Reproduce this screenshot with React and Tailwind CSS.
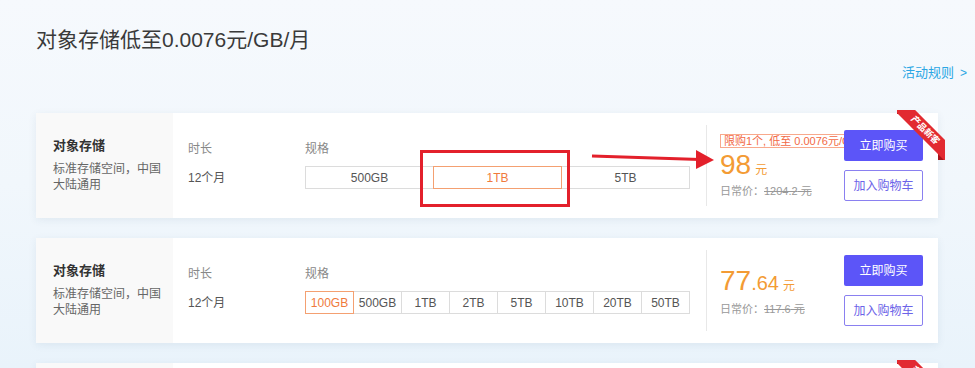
import React from 'react'

const cards = [
  {
    sizes: ['500GB', '1TB', '5TB'],
    selected: 1,
    price: '98',
    decimals: '',
    orig: '1204.2',
    tag: '限购1个, 低至 0.0076元/GB/月',
    ribbon: true,
  },
  {
    sizes: ['100GB', '500GB', '1TB', '2TB', '5TB', '10TB', '20TB', '50TB'],
    selected: 0,
    price: '77',
    decimals: '.64',
    orig: '117.6',
    tag: null,
    ribbon: false,
  },
  {
    sizes: ['100GB', '500GB', '1TB', '2TB', '5TB'],
    selected: 0,
    price: '66',
    decimals: '',
    orig: '99.9',
    tag: null,
    ribbon: true,
  },
]

export default function App() {
  return (
    <div className="relative h-[368px] w-[975px] overflow-hidden bg-gradient-to-b from-[#f6f9fd] via-[#f1f7fc] to-[#e9f3fb] font-['Liberation_Sans','Noto_Sans_CJK_SC',sans-serif]">
      <div className="w-[967px] pl-[36px] pt-[28px]">
        <h1 className="text-[21px] leading-[24px] text-[#3a3a3a]">对象存储低至0.0076元/GB/月</h1>
        <div className="mt-[13px] flex justify-end">
          <span className="flex items-center gap-[6px] text-[13px] leading-[16px] text-[#2ba6e4]">
            活动规则<span className="text-[12px]">&gt;</span>
          </span>
        </div>
        <div className="mt-[32px] flex w-[902px] flex-col gap-[20px]">
          {cards.map((c, i) => (
            <ProductCard key={i} {...c} />
          ))}
        </div>
      </div>

      {/* annotation overlay */}
      <div className="absolute left-[420px] top-[150px] h-[57px] w-[150px] border-[3px] border-[#e3202b]" />
      <svg className="absolute left-[590px] top-[148px]" width="128" height="24" viewBox="0 0 128 24">
        <line x1="2" y1="8" x2="110" y2="11.5" stroke="#e3202b" strokeWidth="3" />
        <polygon points="106,2 124,12 106,21" fill="#e3202b" />
      </svg>
    </div>
  )
}

function ProductCard({ sizes, selected, price, decimals, orig, tag, ribbon }) {
  return (
    <div className="relative flex h-[105px] shrink-0 bg-white shadow-[0_2px_8px_rgba(40,80,120,0.08)]">
      <div className="w-[137px] shrink-0 bg-[#f9f9f9] pl-[17px] pr-[8px] pt-[24px]">
        <div className="text-[13px] font-bold leading-[18px] text-[#333]">对象存储</div>
        <div className="mt-[6px] text-[12px] leading-[16px] text-[#666]">标准存储空间，中国大陆通用</div>
      </div>

      <div className="flex w-[533px] shrink-0 pl-[15px] pt-[28px]">
        <div className="w-[117px]">
          <div className="text-[12px] leading-[16px] text-[#888]">时长</div>
          <div className="mt-[9px] flex h-[23px] items-center text-[12px] text-[#555]">12个月</div>
        </div>
        <div className="w-[385px]">
          <div className="text-[12px] leading-[16px] text-[#888]">规格</div>
          <div className="mt-[9px] flex h-[23px]">
            {sizes.map((s, i) => (
              <div
                key={s}
                className={
                  i === selected
                    ? 'relative z-10 -ml-px flex flex-1 items-center justify-center border border-[#f4a071] text-[12px] text-[#f07a3c] first:ml-0'
                    : '-ml-px flex flex-1 items-center justify-center border border-[#dcdcdc] text-[12px] text-[#555] first:ml-0'
                }
              >
                {s}
              </div>
            ))}
          </div>
        </div>
      </div>

      <div className="my-[12px] w-px shrink-0 bg-[#e8e8e8]" />

      <div className="flex w-[137px] shrink-0 flex-col justify-center overflow-hidden pl-[13px]">
        {tag && (
          <div className="mb-[2px] self-start whitespace-nowrap border border-[#f8a98c] px-[3px] text-[11px] leading-[12px] text-[#f26a46]">
            {tag}
          </div>
        )}
        <div className="flex items-baseline whitespace-nowrap text-[#f39b34]">
          <span className="text-[28px] leading-[30px]">{price}</span>
          {decimals && <span className="text-[20px]">{decimals}</span>}
          <span className="ml-[4px] text-[12px]">元</span>
        </div>
        <div className="mt-[4px] whitespace-nowrap text-[11px] leading-[14px] text-[#999]">
          日常价：<span className="line-through">{orig} 元</span>
        </div>
      </div>

      <div className="flex w-[79px] shrink-0 flex-col justify-center gap-[9px]">
        <button className="h-[31px] rounded-[2px] bg-[#5c55f8] text-[12px] text-white">立即购买</button>
        <button className="h-[31px] rounded-[2px] border border-[#8a80f0] bg-white text-[12px] text-[#6c63e8]">加入购物车</button>
      </div>

      {ribbon && (
        <div className="absolute right-[-7px] top-[-3px] h-[50px] w-[48px] overflow-hidden">
          <div className="absolute left-0 top-[1px] h-[3px] w-[6px] bg-[#a8151b]" />
          <div className="absolute bottom-0 right-0 h-[8px] w-[7px] bg-[#a8151b]" />
          <div className="absolute right-[-18px] top-[13px] flex h-[15px] w-[76px] rotate-45 items-center justify-center bg-[#e22a31] text-[9px] font-bold text-white">
            产品新客
          </div>
        </div>
      )}
    </div>
  )
}
